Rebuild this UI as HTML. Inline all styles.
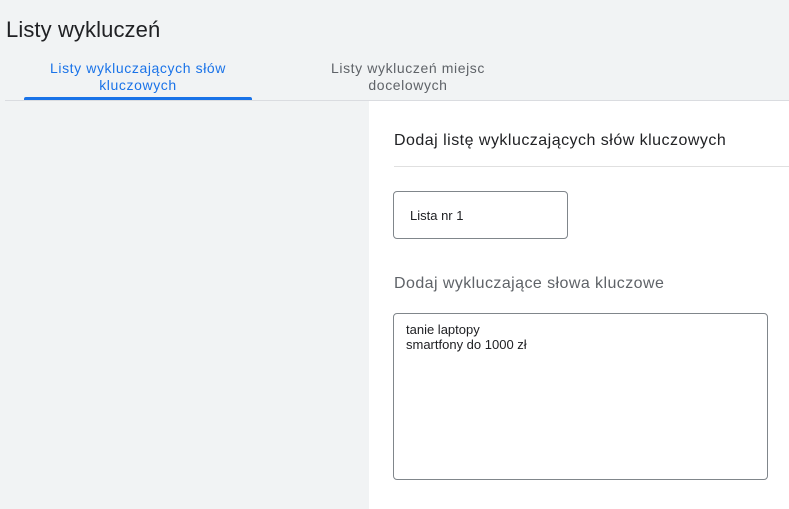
<!DOCTYPE html>
<html><head><meta charset="utf-8"><style>
body{margin:0;width:789px;height:509px;background:#f1f3f4;font-family:"Liberation Sans",Arial,sans-serif;position:relative;overflow:hidden}
.a{position:absolute;white-space:nowrap}
</style></head><body>
<div class="a" style="left:6px;top:17px;font-size:22px;color:#202124;letter-spacing:0.1px">Listy wykluczeń</div>
<div class="a" style="left:24px;top:60px;width:228px;text-align:center;font-size:14px;line-height:17px;color:#1a73e8;letter-spacing:0.6px">Listy wykluczających słów<br>kluczowych</div>
<div class="a" style="left:294px;top:60px;width:228px;text-align:center;font-size:14px;line-height:17px;color:#5f6368;letter-spacing:0.6px">Listy wykluczeń miejsc<br>docelowych</div>
<div class="a" style="left:5px;top:100px;width:784px;height:1px;background:#dadce0"></div>
<div class="a" style="left:24px;top:97px;width:228px;height:3px;background:#1a73e8;border-radius:2px 2px 0 0"></div>
<div class="a" style="left:369px;top:101px;width:420px;height:408px;background:#fff"></div>
<div class="a" style="left:394px;top:132px;font-size:16px;color:#202124;letter-spacing:0.48px">Dodaj listę wykluczających słów kluczowych</div>
<div class="a" style="left:394px;top:166px;width:395px;height:1px;background:#e0e0e0"></div>
<div class="a" style="left:393px;top:191px;width:173px;height:46px;border:1px solid #80868b;border-radius:4px"></div>
<div class="a" style="left:410px;top:208px;font-size:13px;color:#202124">Lista nr 1</div>
<div class="a" style="left:394px;top:275px;font-size:16px;color:#5f6368;letter-spacing:0.43px">Dodaj wykluczające słowa kluczowe</div>
<div class="a" style="left:393px;top:313px;width:373px;height:165px;border:1px solid #80868b;border-radius:4px"></div>
<div class="a" style="left:406px;top:322px;font-size:13px;line-height:15px;color:#202124">tanie laptopy<br>smartfony do 1000 zł</div>
</body></html>
